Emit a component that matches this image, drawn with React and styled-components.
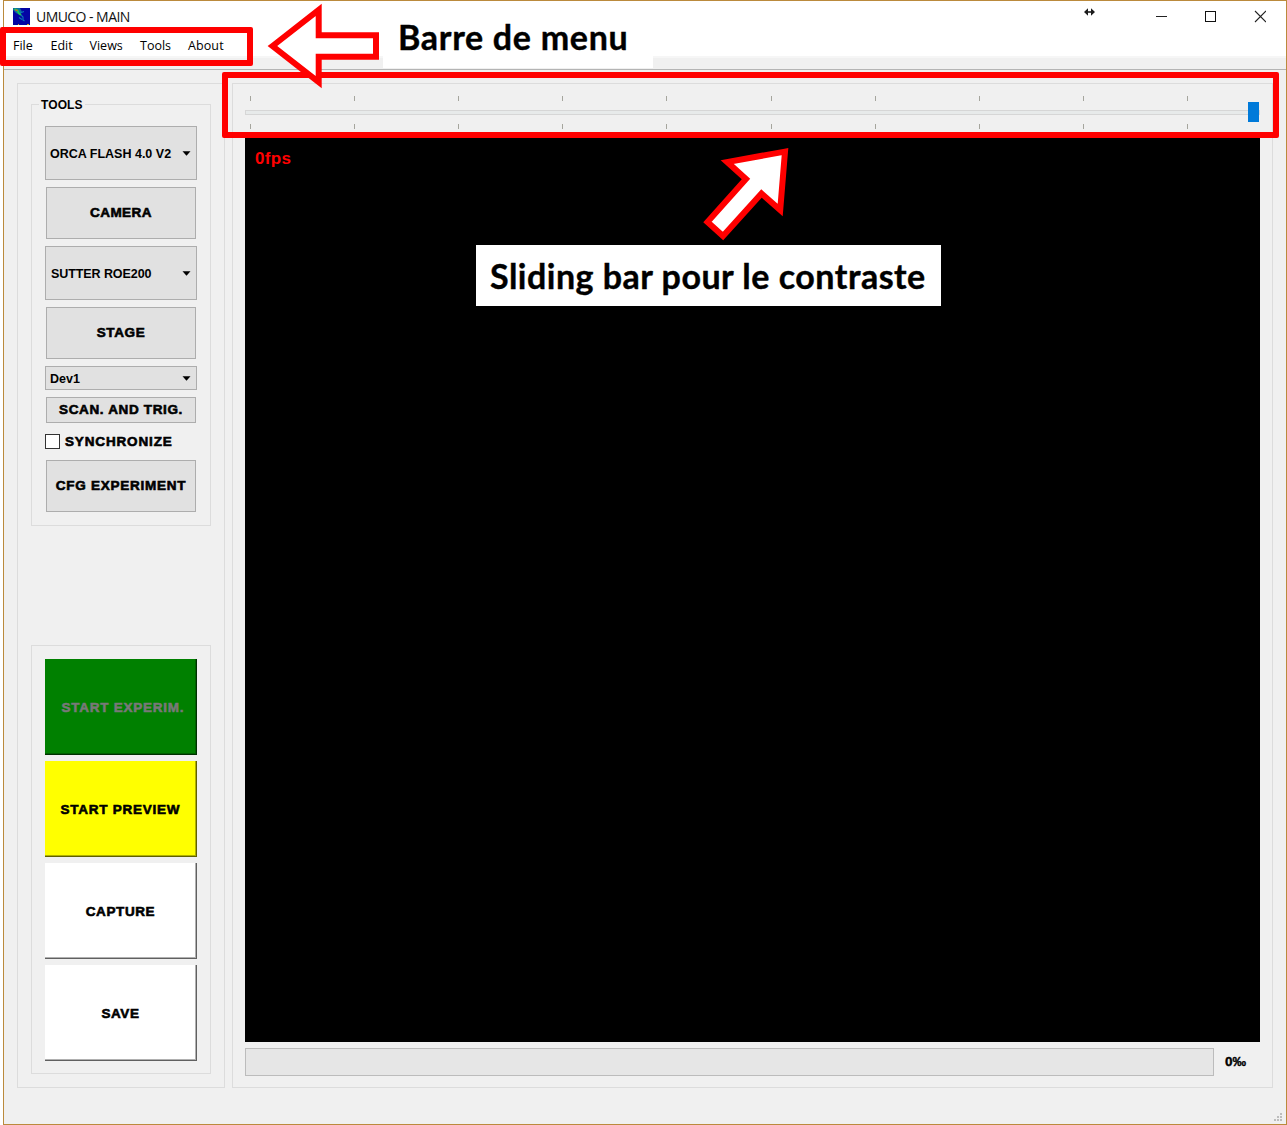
import React from "react";
import styled, { createGlobalStyle } from "styled-components";

const Global = createGlobalStyle`
  * { box-sizing: border-box; }
  html, body { margin: 0; padding: 0; background: #fff; }
  body { width: 1287px; height: 1125px; overflow: hidden; }
`;

const Stage = styled.div`
  position: relative;
  width: 1287px;
  height: 1125px;
  padding-left: 3px;
  background: #fff;
  overflow: hidden;
`;

const Win = styled.div`
  display: flex;
  flex-direction: column;
  width: 1284px;
  height: 1125px;
  border: 1px solid #bb8a3c;
  background: #f0f0f0;
`;

const TitleBar = styled.header`
  display: flex;
  align-items: center;
  height: 30px;
  padding: 1px 18px 0 9px;
  background: #fff;
  font: 14px/20px "Open Sans", "Noto Sans", sans-serif;
  color: #111;
`;

const Title = styled.span`
  flex: 1;
  margin-left: 6px;
  letter-spacing: -0.55px;
`;

const Caption = styled.svg`
  display: block;
  flex: none;
`;

const Controls = styled(Caption)`
  margin: 0 2px 6px 0;
`;

const MenuBar = styled.nav`
  display: flex;
  height: 25px;
  padding-left: 9px;
  background: #fff;
  font: 12.5px/30px "Open Sans", "Noto Sans", sans-serif;
  color: #000;
`;

const MenuItem = styled.span`
  width: ${(p) => p.$w}px;
  letter-spacing: ${(p) => p.$ls}px;
  white-space: nowrap;
`;

const Strip = styled.div`
  height: 14px;
  border-top: 2px solid #f6f6f6;
  border-bottom: 1px solid #b4b4b4;
  background: #f0f0f0;
`;

const StripGap = styled.div`
  width: 270px;
  height: 12px;
  margin: -2px 0 0 379px;
  background: #fff;
`;

const Body = styled.main`
  display: flex;
  gap: 7px;
  padding: 13px 13px 0 13px;
  height: 1018px;
`;

const Panel = styled.section`
  display: flex;
  flex-direction: column;
  flex: none;
  width: ${(p) => p.$w}px;
  height: 1005px;
  padding: ${(p) => p.$pad};
  border: 1px solid #dcdcdc;
`;

const Group = styled.fieldset`
  display: flex;
  flex-direction: column;
  align-items: center;
  min-width: 0;
  width: 180px;
  height: ${(p) => p.$h}px;
  margin: ${(p) => p.$mt || 0}px 0 0;
  padding: ${(p) => p.$pt}px 0 0;
  border: 1px solid #dcdcdc;
  color: #000;
`;

const Legend = styled.legend`
  margin-left: 7px;
  padding: 1px 2px 0;
  height: 15px;
  font: bold 12px/15px "Liberation Sans", Arial, sans-serif;
  letter-spacing: 0.1px;
`;

const Combo = styled.div`
  display: flex;
  align-items: center;
  justify-content: space-between;
  width: 152px;
  height: ${(p) => p.$h}px;
  margin-bottom: 7px;
  padding: 0 5px 0 ${(p) => p.$pl || 4}px;
  border: 1px solid #adadad;
  background: #e1e1e1;
  font: bold 12.5px/16px "Liberation Sans", Arial, sans-serif;
  letter-spacing: ${(p) => p.$ls}px;
  white-space: nowrap;
`;

const ComboText = styled.span`
  padding-top: 1px;
`;

const Button = styled.button`
  width: 150px;
  height: ${(p) => p.$h}px;
  margin: 0 0 ${(p) => (p.$mb === undefined ? 7 : p.$mb)}px;
  padding: 0;
  border: 1px solid #adadad;
  background: #e1e1e1;
  font: bold 13.5px/16px "Liberation Sans", Arial, sans-serif;
  letter-spacing: ${(p) => p.$ls}px;
  -webkit-text-stroke: 0.6px currentColor;
  color: #000;
  white-space: nowrap;
`;

const ActionButton = styled(Button)`
  width: 152px;
  height: 96px;
  margin-bottom: 6px;
  padding: 2px 0 0 ${(p) => p.$pl || 0}px;
  border-style: solid;
  border-width: 0 1px 1px 0;
  border-color: ${(p) => p.$dark};
  box-shadow: inset -1px -1px 0 ${(p) => p.$mid};
  background: ${(p) => p.$bg};
  color: ${(p) => p.$fg || "#000"};
`;

const CheckRow = styled.label`
  display: flex;
  align-items: center;
  width: 152px;
  height: 15px;
  margin: 4px 0 11px;
  font: bold 13.5px/15px "Liberation Sans", Arial, sans-serif;
  letter-spacing: 0.85px;
  -webkit-text-stroke: 0.6px currentColor;
`;

const Box = styled.span`
  width: 15px;
  height: 15px;
  margin-right: 5px;
  border: 1px solid #333;
  background: #fff;
`;

const Slider = styled.div`
  display: flex;
  flex-direction: column;
  height: 54px;
  padding-top: 12px;
`;

const Ticks = styled.div`
  display: flex;
  justify-content: space-between;
  width: 938px;
  height: 5px;
  margin-left: 5px;
`;

const Tick = styled.i`
  width: 1px;
  height: 5px;
  background: #a5a59d;
`;

const Groove = styled.div`
  display: flex;
  align-items: center;
  justify-content: flex-end;
  height: 5px;
  margin: 9px 0;
  border: 1px solid #d6d6d6;
  background: #e7eaea;
`;

const Handle = styled.div`
  flex: none;
  width: 11px;
  height: 20px;
  margin-bottom: 1px;
  background: #007ad9;
`;

const View = styled.div`
  width: 1015px;
  height: 904px;
  padding: 11px 10px;
  background: #000;
  color: #f00;
  font: bold 17px/20px "Liberation Sans", Arial, sans-serif;
  letter-spacing: 0.3px;
`;

const Footer = styled.div`
  display: flex;
  align-items: center;
  height: 28px;
  margin-top: 6px;
  font: bold 13.5px/16px "Liberation Sans", Arial, sans-serif;
  -webkit-text-stroke: 0.4px currentColor;
`;

const Progress = styled.div`
  width: 969px;
  height: 28px;
  margin-right: 11px;
  border: 1px solid #bcbcbc;
  background: #e6e6e6;
`;

const GripRow = styled.div`
  display: flex;
  justify-content: flex-end;
  margin-top: auto;
  padding: 0 3px 2px 0;
`;

const Frame = styled.div`
  position: absolute;
  left: ${(p) => p.$x}px;
  top: ${(p) => p.$y}px;
  width: ${(p) => p.$w}px;
  height: ${(p) => p.$h}px;
  border: 6px solid #f00;
  border-radius: 2px;
`;

const Arrows = styled.svg`
  position: absolute;
  left: 0;
  top: 0;
`;

const Note = styled.div`
  position: absolute;
  left: ${(p) => p.$x}px;
  top: ${(p) => p.$y}px;
  width: ${(p) => p.$w}px;
  height: ${(p) => p.$h}px;
  padding-left: ${(p) => p.$pl}px;
  background: ${(p) => p.$bg};
  font: bold ${(p) => p.$fs}px/${(p) => p.$h}px Lato, Carlito, sans-serif;
  letter-spacing: ${(p) => p.$ls}px;
  -webkit-text-stroke: 0.4px #000;
  color: #000;
  white-space: nowrap;
`;

const AppIcon = () => (
  <Caption width="17" height="17" viewBox="0 0 17 17">
    <rect width="17" height="17" fill="#0404a4" />
    <path d="M0 0h7l2 4-2 3-4-2-3-3z" fill="#0870a0" />
    <path d="M1.5 1l3 1.5 1.5 3 2 1.5" fill="none" stroke="#20c850" strokeWidth="1.8" />
    <path d="M8 7l2 2v3l1.5 1M7 5l4-1.5M6 9.5l3 2" fill="none" stroke="#0c78b8" strokeWidth="1.1" />
    <rect x="2.5" y="1.5" width="2" height="1.6" fill="#c8641e" />
    <path d="M5 16.5h1M14 16.5h2" stroke="#d0a020" />
  </Caption>
);

const Caret = () => (
  <Caption width="9" height="5" viewBox="0 0 9 5">
    <path d="M0.5 0.2h8L4.5 4.7z" fill="#000" />
  </Caption>
);

const WindowControls = () => (
  <Controls width="184" height="20" viewBox="0 0 184 20">
    <path d="M4 8h7" fill="none" stroke="#1c1c1c" strokeWidth="1.6" />
    <path d="M2 8l4-3.8v7.6zM13 8L9 4.2v7.6z" fill="#1c1c1c" />
    <path d="M74 12.5h11" stroke="#222" />
    <rect x="123.5" y="7.5" width="10" height="10" fill="none" stroke="#111" />
    <path d="M173 7l11 11M184 7l-11 11" stroke="#222" strokeWidth="1.1" />
  </Controls>
);

const Grip = () => (
  <Caption width="9" height="9" viewBox="0 0 9 9" fill="#bdbdbd">
    {[[6, 0], [3, 3], [6, 3], [0, 6], [3, 6], [6, 6]].map(([x, y]) => (
      <rect key={x + "-" + y} x={x} y={y} width="2" height="2" />
    ))}
  </Caption>
);

const tickRow = Array.from({ length: 10 }, (_, i) => <Tick key={i} />);

export default function App() {
  return (
    <Stage>
      <Global />
      <Win>
        <TitleBar>
          <AppIcon />
          <Title>UMUCO - MAIN</Title>
          <WindowControls />
        </TitleBar>
        <MenuBar>
          <MenuItem $w={37.5} $ls={0}>File</MenuItem>
          <MenuItem $w={39} $ls={0}>Edit</MenuItem>
          <MenuItem $w={50.5} $ls={0}>Views</MenuItem>
          <MenuItem $w={48} $ls={0}>Tools</MenuItem>
          <MenuItem $w={50} $ls={0.1}>About</MenuItem>
        </MenuBar>
        <Strip><StripGap /></Strip>
        <Body>
          <Panel $w={208} $pad="13px">
            <Group $h={429} $pt={14}>
              <Legend>TOOLS</Legend>
              <Combo $h={54} $ls={0}><ComboText>ORCA FLASH 4.0 V2</ComboText><Caret /></Combo>
              <Button $h={52} $ls={0.45}>CAMERA</Button>
              <Combo $h={54} $ls={-0.08} $pl={5}><ComboText>SUTTER ROE200</ComboText><Caret /></Combo>
              <Button $h={52} $ls={0.6}>STAGE</Button>
              <Combo $h={24} $ls={0}><ComboText>Dev1</ComboText><Caret /></Combo>
              <Button $h={26} $ls={0.65}>SCAN. AND TRIG.</Button>
              <CheckRow><Box />SYNCHRONIZE</CheckRow>
              <Button $h={52} $ls={0.75} $mb={0}>CFG EXPERIMENT</Button>
            </Group>
            <Group as="div" $h={429} $mt={119} $pt={13}>
              <ActionButton $ls={0.75} $pl={5} $bg="#008000" $mid="#006000" $dark="#003000" $fg="#787878">START EXPERIM.</ActionButton>
              <ActionButton $ls={0.75} $bg="#ffff00" $mid="#b0b000" $dark="#606000">START PREVIEW</ActionButton>
              <ActionButton $ls={0.6} $bg="#fff" $mid="#b0b0b0" $dark="#606060">CAPTURE</ActionButton>
              <ActionButton $ls={0.6} $bg="#fff" $mid="#b0b0b0" $dark="#606060">SAVE</ActionButton>
            </Group>
          </Panel>
          <Panel $w={1041} $pad="0 12px">
            <Slider>
              <Ticks>{tickRow}</Ticks>
              <Groove><Handle /></Groove>
              <Ticks>{tickRow}</Ticks>
            </Slider>
            <View>0fps</View>
            <Footer><Progress />0‰</Footer>
          </Panel>
        </Body>
        <GripRow><Grip /></GripRow>
      </Win>
      <Frame $x={0} $y={27} $w={253} $h={39} />
      <Frame $x={222} $y={72} $w={1057} $h={66} />
      <Note $x={398} $y={15} $w={240} $h={44} $pl={0} $bg="transparent" $fs={34} $ls={0.7}>Barre de menu</Note>
      <Note $x={476} $y={245} $w={465} $h={61} $pl={14} $bg="#fff" $fs={34} $ls={0.5}>Sliding bar pour le contraste</Note>
      <Arrows width="1287" height="260" viewBox="0 0 1287 260">
        <g fill="#fff" stroke="#f00" strokeWidth="6" strokeMiterlimit="10">
          <path d="M272.5 46L318.7 10v25.2H376v21.5h-57.3V82z" />
          <path d="M785 151.6L727.2 162l18.8 17-38.5 43 15.5 14 38.5-42.5 18.7 16.5z" />
        </g>
      </Arrows>
    </Stage>
  );
}
